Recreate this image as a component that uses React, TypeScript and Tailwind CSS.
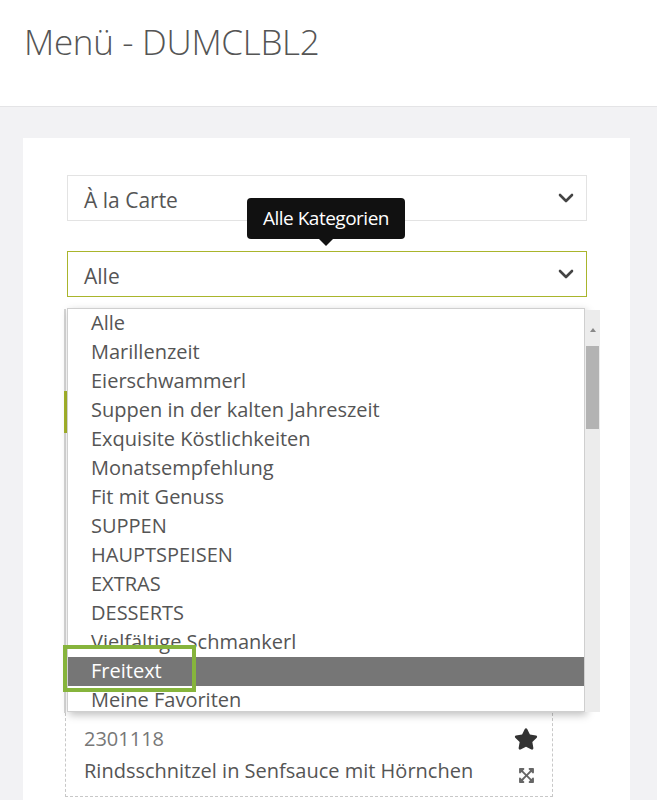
import React from 'react';
import { FaStar, FaExpandArrowsAlt } from 'react-icons/fa';

const categories = [
  'Alle',
  'Marillenzeit',
  'Eierschwammerl',
  'Suppen in der kalten Jahreszeit',
  'Exquisite Köstlichkeiten',
  'Monatsempfehlung',
  'Fit mit Genuss',
  'SUPPEN',
  'HAUPTSPEISEN',
  'EXTRAS',
  'DESSERTS',
  'Vielfältige Schmankerl',
  'Freitext',
  'Meine Favoriten',
];

const Chevron = () => (
  <svg width="16" height="10" viewBox="0 0 16 10" className="text-[#444]">
    <polyline points="2,2 8,8 14,2" fill="none" stroke="currentColor" strokeWidth="2.6" strokeLinecap="round" strokeLinejoin="round" />
  </svg>
);

const App: React.FC = () => {
  return (
    <div className="min-h-[800px] w-[657px] bg-[#f2f2f4] font-['Open_Sans',sans-serif] text-[#444] overflow-hidden">
      <header className="h-[107px] bg-white border-b border-[#e4e4e6] px-6 pt-[20px]">
        <h1 className="text-[35px] font-light leading-[44px] text-[#555] tracking-[-0.3px]">Menü - DUMCLBL2</h1>
      </header>

      <main className="pt-[31px] pl-[23px] pr-[27px]">
        <div className="relative bg-white h-[700px] pt-[37px] pl-[44px] pr-[43px]">
          {/* menu type select */}
          <div className="h-[46px] border border-[#e3e3e3] flex items-center justify-between pl-[16px] pr-[12px]">
            <span className="text-[21px] leading-[28px] mt-[3px] text-[#555]">À la Carte</span>
            <Chevron />
          </div>

          {/* category select with tooltip */}
          <div className="relative mt-[30px]">
            <div className="absolute -top-[53px] left-[180px] bg-[#111] text-white rounded-[4px] h-[41px] w-[158px] flex items-center justify-center text-[19px] font-medium tracking-[-0.5px] z-30">
              Alle Kategorien
              <span className="absolute -bottom-[7px] left-1/2 -translate-x-1/2 w-0 h-0 border-l-[7px] border-r-[7px] border-t-[7px] border-l-transparent border-r-transparent border-t-[#111]" />
            </div>
            <div className="h-[46px] border border-[#a9b52c] flex items-center justify-between pl-[16px] pr-[12px]">
              <span className="text-[21px] leading-[28px] mt-[4px] text-[#555]">Alle</span>
              <Chevron />
            </div>
          </div>

          {/* content behind the open list */}
          <div className="relative mt-[12px] -ml-[3px] border-l-2 border-[#d6d6d6] h-[404px]">
            <div className="absolute -left-[2px] top-[82px] w-[3px] h-[42px] bg-[#a4b42a]" />
          </div>
          <div className="ml-[-2px] w-[488px] h-[84px] border border-dashed border-[#c8c8c8] border-t-0 flex justify-between pl-[18px] pr-[14px] pt-[14px]">
            <div className="flex flex-col gap-[8px]">
              <span className="text-[20px] text-[#777] leading-[24px]">2301118</span>
              <span className="text-[20px] text-[#555] leading-[24px]">Rindsschnitzel in Senfsauce mit Hörnchen</span>
            </div>
            <div className="flex flex-col items-center gap-[16px]">
              <FaStar size={24} className="text-[#333]" />
              <FaExpandArrowsAlt size={17} className="text-[#666]" />
            </div>
          </div>

          {/* open dropdown list */}
          <div className="absolute left-[44px] top-[170px] w-[518px] z-20">
            <div className="bg-white border border-[#cfcfcf] shadow-[2px_3px_8px_rgba(0,0,0,0.25)] h-[404px] overflow-hidden">
              {categories.map((c) => (
                <div
                  key={c}
                  className={
                    c === 'Freitext'
                      ? 'h-[29px] leading-[28px] pl-[23px] text-[20px] bg-[#767676] text-white'
                      : 'h-[29px] leading-[28px] pl-[23px] text-[20px] text-[#555]'
                  }
                >
                  {c}
                </div>
              ))}
            </div>
            {/* scrollbar */}
            <div className="absolute -right-[15px] top-[2px] w-[15px] h-[402px] bg-[#ececec] flex flex-col items-center">
              <span className="mt-[18px] w-0 h-0 border-l-[3px] border-r-[3px] border-b-[4px] border-l-transparent border-r-transparent border-b-[#888]" />
              <div className="mt-[14px] w-[13px] h-[83px] bg-[#b3b3b3]" />
            </div>
            {/* annotation frame */}
            <div className="absolute left-[-4px] top-[337px] w-[133px] h-[47px] border-[4px] border-[#86b43c]" />
          </div>
        </div>
      </main>
    </div>
  );
};

export default App;
